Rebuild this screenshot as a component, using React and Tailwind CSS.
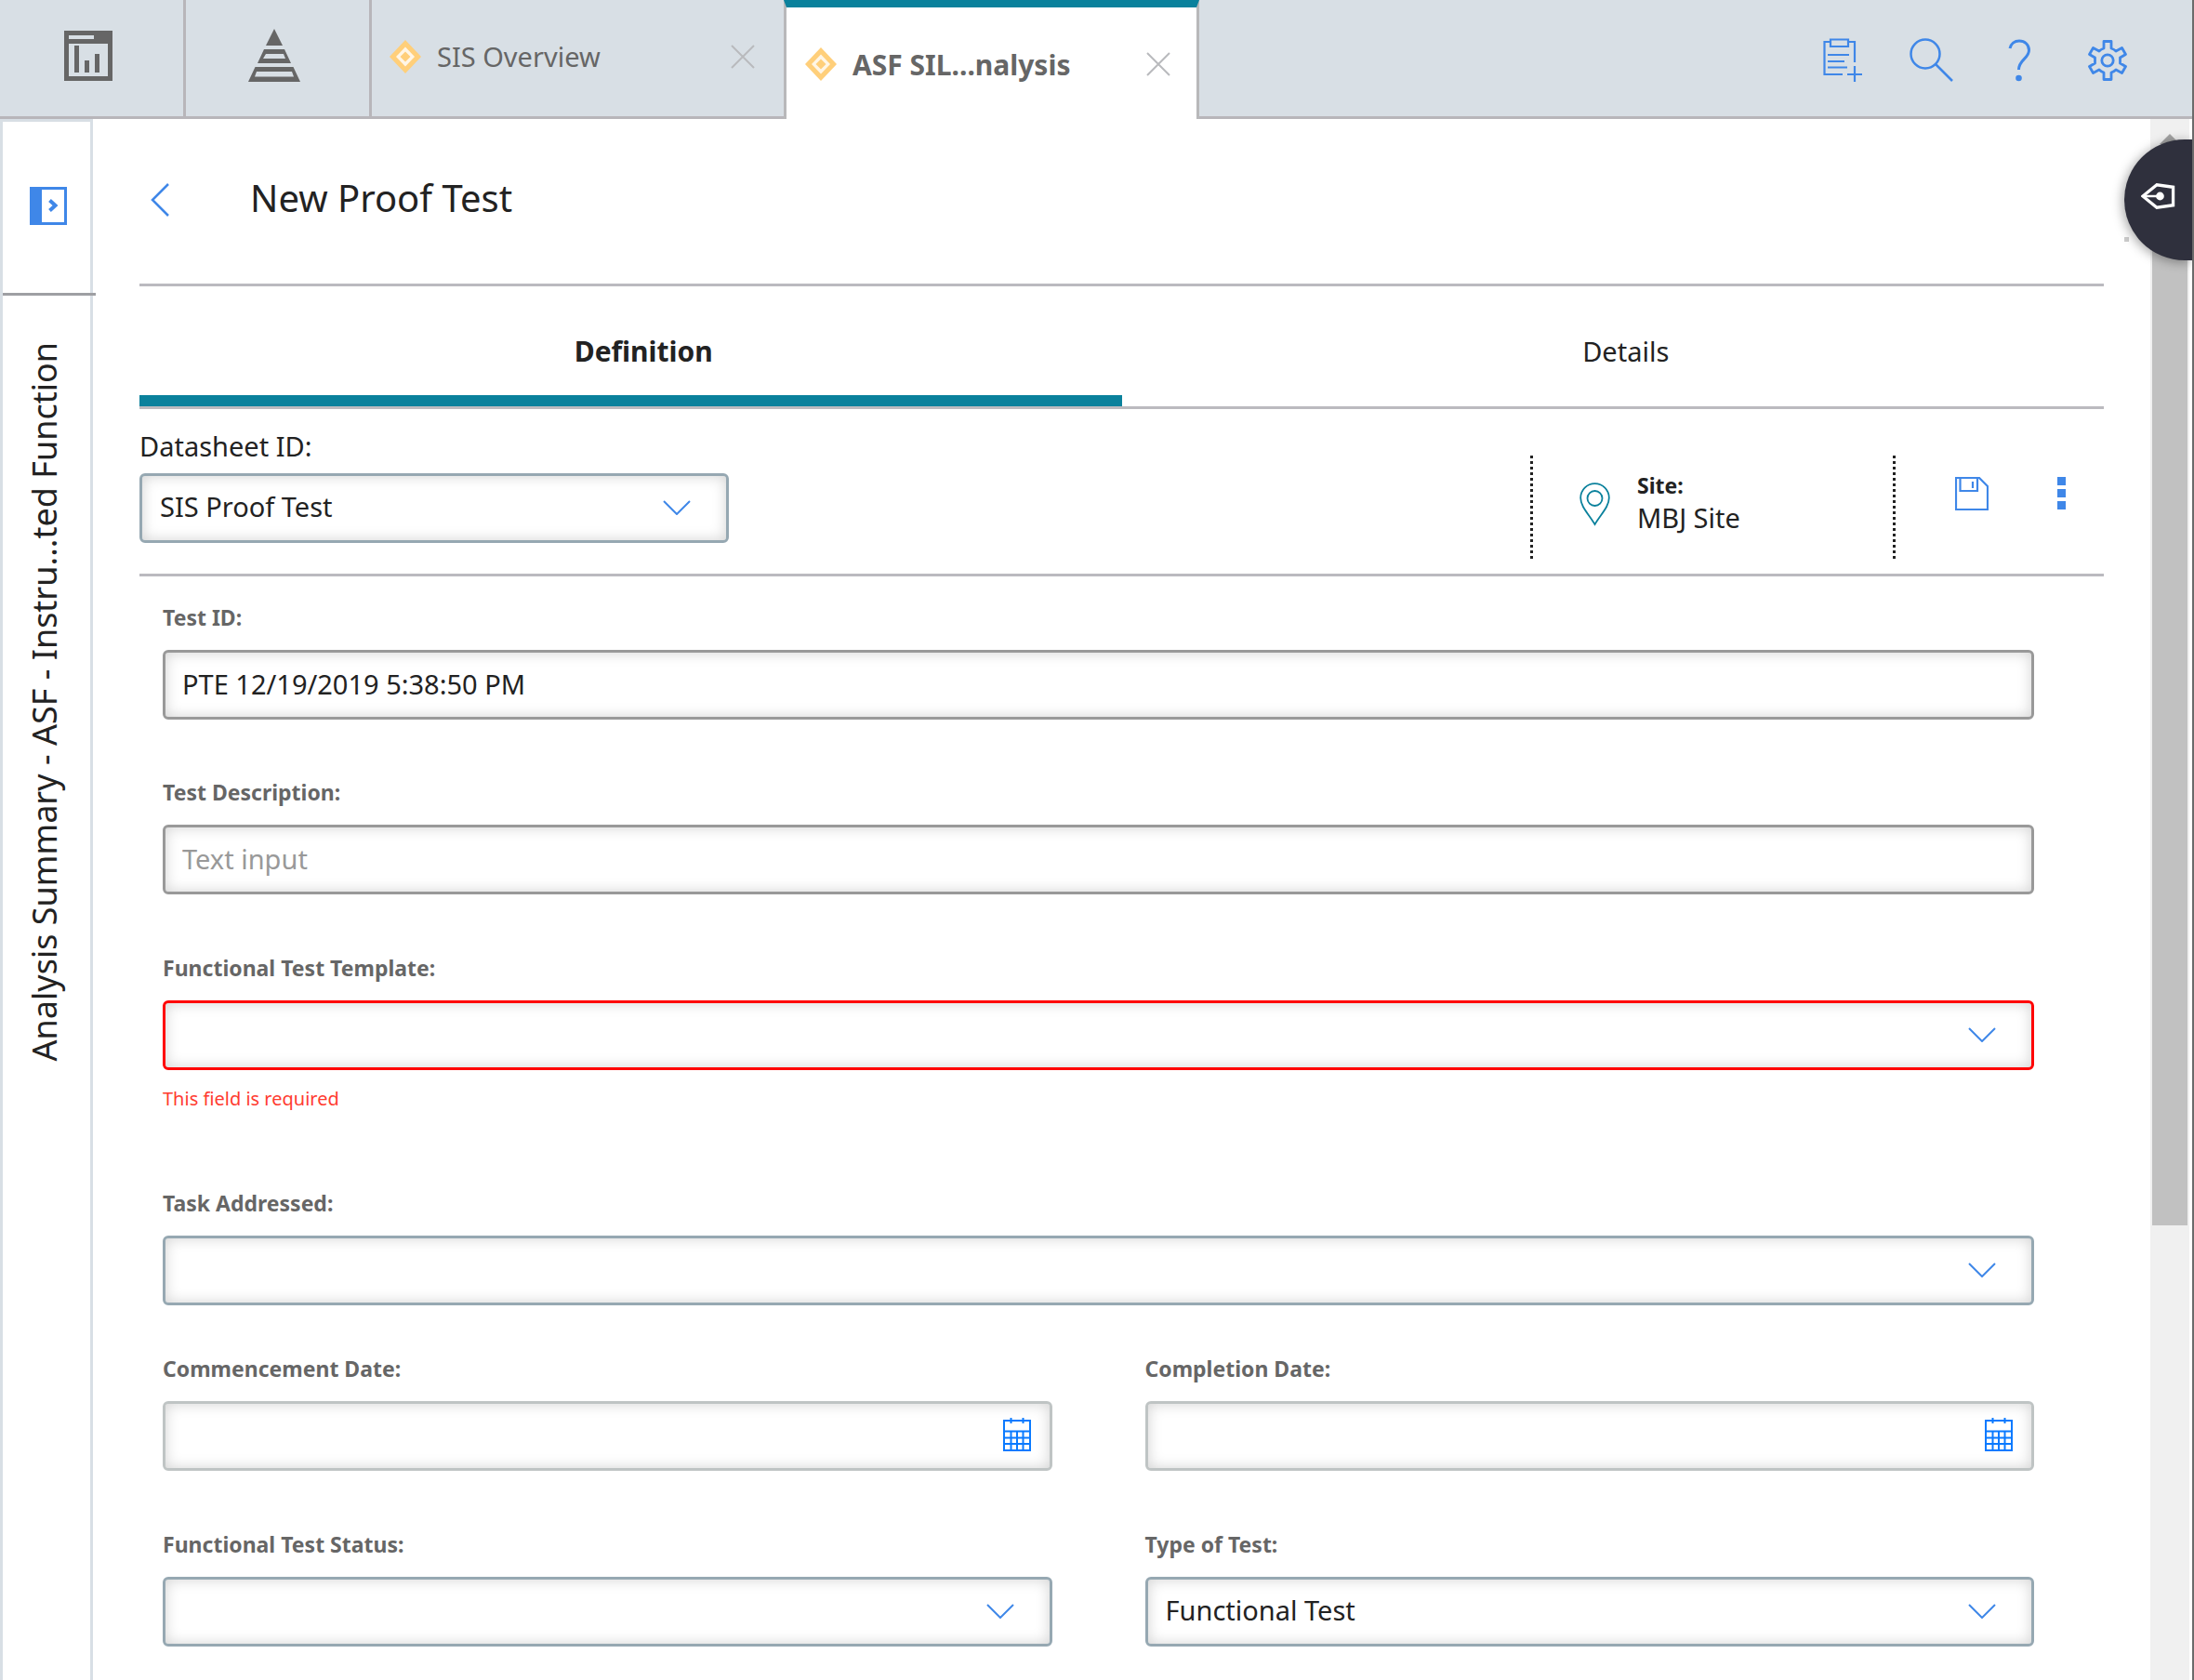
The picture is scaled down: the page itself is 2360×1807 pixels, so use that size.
const fieldBase =
  "h-[75px] w-full rounded-md border-[3px] bg-white pr-5 pb-[3px] text-[29px] leading-10 text-[#222222] shadow-[inset_0_0_15px_rgba(0,0,0,0.18)] outline-none placeholder:text-[#999999]";

function CloseIcon() {
  return (
    <svg className="h-[26px] w-[26px]" viewBox="0 0 26 26" fill="none" stroke="#b9babd" strokeWidth="2">
      <path d="M1 1 25 25M25 1 1 25" />
    </svg>
  );
}

function DiamondIcon() {
  return (
    <svg className="h-9 w-[34px] shrink-0" viewBox="0 0 34 36">
      <path d="M17 0 34 18 17 36 0 18Z" fill="#ffcf7a" />
      <path d="M17 7.5 27 18 17 28.500 7 18Z" fill="#fff6e6" />
      <path d="M17 12.500 22.500 18 17 23.500 11.500 18Z" fill="#ffcf7a" />
    </svg>
  );
}

function Tab({ label, active }) {
  return (
    <div
      className={
        active
          ? "flex w-[447px] items-center border-x-[3px] border-t-8 border-x-[#b8b8ba] border-t-[#0a819c] bg-white pt-[2px] pr-[28px] pl-5"
          : "flex w-[443px] items-center border-b-[3px] border-[#b8b6ba] pr-[31px] pb-1 pl-[19px]"
      }
    >
      <DiamondIcon />
      <button
        className={
          active
            ? "ml-[17px] flex-1 text-left text-[30px] font-bold text-[#666666]"
            : "ml-[17px] flex-1 text-left text-[29px] text-[#666666]"
        }
      >
        {label}
      </button>
      <button aria-label={"Close " + label}>
        <CloseIcon />
      </button>
    </div>
  );
}

function Header() {
  return (
    <header className="flex h-32 bg-[#d8dfe5]">
      <button
        aria-label="Dashboard"
        className="flex w-[200px] items-center justify-center border-r-[3px] border-b-[3px] border-[#b8b6ba] pr-2 pb-[6px]"
      >
        <svg className="h-[54px] w-[52px]" viewBox="0 0 52 54" fill="#666666">
          <path
            fillRule="evenodd"
            d="M0 0H52V54H0ZM5 5V9H32V5ZM5 14V49H47V14Z"
          />
          <path d="M11 16h5v29h-5zM22 32h5v13h-5zM33 25h5v20h-5z" />
        </svg>
      </button>
      <button
        aria-label="Hierarchy"
        className="flex w-[200px] items-center justify-center border-r-[3px] border-b-[3px] border-[#b8b6ba] pr-2 pb-[6px]"
      >
        <svg className="h-[57px] w-14" viewBox="0 0 56 57" fill="#666666">
          <path d="M28 0 37 18H19Z" />
          <path fillRule="evenodd" d="M17 22H39L46 37H10ZM19 27 16 32H40L38 27Z" />
          <path fillRule="evenodd" d="M7.500 41H48.500L56 57H0ZM9 46 7 51.500H49L47 46Z" />
        </svg>
      </button>
      <Tab label="SIS Overview" />
      <Tab label="ASF SIL...nalysis" active />
      <div className="flex flex-1 items-center justify-end border-b-[3px] border-[#b8b6ba] pt-1 pr-[70px] text-[#3f87e8]">
        <button aria-label="Add to clipboard" className="mr-[51px]">
          <svg className="h-[47px] w-[42px]" viewBox="0 0 42 47" fill="none" stroke="currentColor" strokeWidth="2.200">
            <path d="M8 4H1.500V39H21M27 4H34V26M8 1.500H27V9H8ZM5 18H28M5 25H23M5 31.500H26M34 30V47M26 39H42" />
          </svg>
        </button>
        <button aria-label="Search" className="mr-[59px]">
          <svg className="h-[47px] w-[47px]" viewBox="0 0 47 47" fill="none" stroke="currentColor" strokeWidth="2.500">
            <circle cx="17" cy="17" r="15.500" />
            <path d="M28 28 46 46" />
          </svg>
        </button>
        <button aria-label="Help" className="mr-[62px]">
          <svg className="h-[46px] w-6" viewBox="0 0 24 46" fill="none" stroke="currentColor" strokeWidth="3">
            <path d="M2 10C3 5 7 2 12 2C18 2 22.500 6 22.500 12C22.500 21 11.500 22 11.500 33" />
            <circle cx="11.500" cy="42" r="3.300" fill="currentColor" stroke="none" />
          </svg>
        </button>
        <button aria-label="Settings">
          <svg className="h-11 w-[42px]" viewBox="0 0 42 44" fill="none" stroke="currentColor" strokeWidth="2.800" strokeLinejoin="round">
            <path d="M17 1.500H25V9Q28 10 30 12L36.500 8.500L40.500 15.500L34.500 19V25L40.500 28.500L36.500 35.500L30 32Q28 34 25 35V42.500H17V35Q14 34 12 32L5.500 35.500L1.500 28.500L7.500 25V19L1.500 15.500L5.500 8.500L12 12Q14 10 17 9Z" />
            <circle cx="21" cy="22" r="6.200" />
          </svg>
        </button>
      </div>
    </header>
  );
}

function Sidebar() {
  return (
    <aside className="flex w-[100px] shrink-0 flex-col border-x-[3px] border-t-[3px] border-[#d8dfe5]">
      <div className="-mr-[6px] flex h-[187px] items-center border-b-[3px] border-[#9e9fa3] pb-1 pl-[29px]">
        <button aria-label="Expand panel" className="text-[#3f87e8]">
          <svg className="h-[41px] w-10" viewBox="0 0 40 41" fill="none">
            <path fillRule="evenodd" d="M0 0H40V41H0ZM13 3V38H37V3Z" fill="currentColor" />
            <path d="M21.500 14.500 27.500 20 21.500 25.500" stroke="currentColor" strokeWidth="4" />
          </svg>
        </button>
      </div>
      <div className="flex justify-center pt-[50px] pr-1">
        <span className="rotate-180 text-[36px] leading-[50px] whitespace-nowrap text-[#222222] [writing-mode:vertical-rl]">
          Analysis Summary - ASF - Instru...ted Function
        </span>
      </div>
    </aside>
  );
}

function Label({ htmlFor, children }) {
  return (
    <label htmlFor={htmlFor} className="mb-[19px] h-8 text-[23px] leading-8 font-bold text-[#666666]">
      {children}
    </label>
  );
}

function Chevron() {
  return (
    <svg
      className="pointer-events-none absolute top-[29px] right-[41px] h-4 w-[30px]"
      viewBox="0 0 30 16"
      fill="none"
      stroke="#3f87e8"
      strokeWidth="2"
    >
      <path d="M1 1 15 15 29 1" />
    </svg>
  );
}

function Select({ id, value, error }) {
  return (
    <div className="relative">
      <select
        id={id}
        defaultValue={value}
        aria-invalid={error ? true : undefined}
        className={fieldBase + (error ? " appearance-none border-[#ff0000] pl-[19px]" : " appearance-none border-[#96a8b2] pl-[19px]")}
      >
        <option>{value}</option>
      </select>
      <Chevron />
    </div>
  );
}

function SelectField({ id, label, value = "", error }) {
  return (
    <div className="flex flex-1 flex-col">
      <Label htmlFor={id}>{label}</Label>
      <Select id={id} value={value} error={error} />
      {error && <p className="mt-[15px] h-8 text-[20px] leading-8 text-[#ff3b30]">{error}</p>}
    </div>
  );
}

function TextField({ id, label, value, placeholder }) {
  return (
    <div className="flex flex-1 flex-col">
      <Label htmlFor={id}>{label}</Label>
      <input
        id={id}
        type="text"
        defaultValue={value}
        placeholder={placeholder}
        className={fieldBase + " border-[#999999] pl-[18px]"}
      />
    </div>
  );
}

function DateField({ id, label }) {
  return (
    <div className="flex flex-1 flex-col">
      <Label htmlFor={id}>{label}</Label>
      <div className="relative">
        <input id={id} type="text" className={fieldBase + " border-[#bfc4c4] pl-[18px]"} />
        <button type="button" aria-label={"Pick " + label} className="absolute top-[18px] right-[23px]">
          <svg className="h-9 w-[30px]" viewBox="0 0 30 36" fill="none" stroke="#0a7aff" strokeWidth="2">
            <path d="M1 3H29V35H1ZM1 14.500H29M1 21.500H29M1 28H29M8.500 0V6M21.500 0V6M8.500 14.500V35M15 14.500V35M21.500 14.500V35" />
          </svg>
        </button>
      </div>
    </div>
  );
}

function DottedRule() {
  return (
    <div className="h-[111px] w-[3px] bg-[repeating-linear-gradient(to_bottom,#222222_0_3px,transparent_3px_6px)]" />
  );
}

function Toolbar() {
  return (
    <div className="flex h-[180px] border-b-[3px] border-[#bbbabf]">
      <div className="flex w-[634px] flex-col pt-5">
        <label htmlFor="datasheet" className="mb-[9px] h-10 text-[29px] leading-10 text-[#222222]">
          Datasheet ID:
        </label>
        <Select id="datasheet" value="SIS Proof Test" />
      </div>
      <div className="ml-auto flex pt-[50px]">
        <DottedRule />
        <svg className="mt-[29px] ml-[50px] h-[47px] w-[33px]" viewBox="0 0 33 47" fill="none" stroke="#0a819c" strokeWidth="1.800">
          <path d="M16.500 45C10 34 1.200 26 1.200 16.500A15.300 15.300 0 0 1 31.800 16.500C31.800 26 23 34 16.500 45Z" />
          <circle cx="16.500" cy="17" r="8" />
        </svg>
        <div className="ml-[29px] w-[275px] pt-[15px] text-[#222222]">
          <div className="h-[34px] text-[23px] leading-[34px] font-bold">Site:</div>
          <div className="h-9 text-[29px] leading-9">MBJ Site</div>
        </div>
        <DottedRule />
        <button aria-label="Save" className="mt-[23px] ml-16 h-9 text-[#3f87e8]">
          <svg className="h-9 w-9" viewBox="0 0 36 36" fill="none" stroke="currentColor" strokeWidth="2.200">
            <path d="M1 1H26L35 10V35H1Z" />
            <path d="M5.500 1V15H24V1M19 5V12" />
          </svg>
        </button>
        <button aria-label="More actions" className="mt-[23px] mr-[41px] ml-[74px] flex h-9 flex-col gap-1">
          <span className="size-[9px] bg-[#3f87e8]" />
          <span className="size-[9px] bg-[#3f87e8]" />
          <span className="size-[9px] bg-[#3f87e8]" />
        </button>
      </div>
    </div>
  );
}

function Scrollbar() {
  return (
    <div className="relative w-[45px] shrink-0">
      <div className="flex h-full w-[42px] flex-col items-center bg-[#f0f0f0]">
        <svg className="mt-4 h-[11px] w-[22px]" viewBox="0 0 22 11" fill="#a3a3a3">
          <path d="M11 0 22 11H0Z" />
        </svg>
        <div className="mt-4 h-[1147px] w-[38px] bg-[#c1c1c1]" />
      </div>
      <div className="absolute top-[127px] -left-7 size-[5px] bg-[#cccccc]" />
      <button
        aria-label="Open guide"
        className="absolute top-[22px] right-0 flex h-[130px] w-[73px] items-center rounded-l-full bg-[#2f303d] pr-[18px] pb-2 pl-[18px] shadow-[-2px_2px_12px_rgba(0,0,0,0.35)]"
      >
        <svg className="h-[30px] w-[38px]" viewBox="0 0 38 30" fill="none" stroke="#ffffff">
          <path d="M2 15 17.500 2.500 35.500 5V25L17.500 27.500Z" strokeWidth="3.400" />
          <path d="M3 15H20" strokeWidth="2.500" />
          <circle cx="21" cy="15" r="4.500" fill="#ffffff" stroke="none" />
        </svg>
      </button>
    </div>
  );
}

export default function App() {
  return (
    <div className='flex h-screen flex-col overflow-hidden border-r-2 border-[#6b6b6b] bg-white font-["Noto_Sans","Open_Sans",sans-serif]'>
      <Header />
      <div className="flex min-h-0 flex-1">
        <Sidebar />
        <main className="flex-1 pr-[50px] pl-[50px]">
          <div className="flex h-[180px] items-center border-b-[3px] border-[#bbbabf] pb-1 pl-3">
            <button aria-label="Back">
              <svg className="h-9 w-5" viewBox="0 0 20 36" fill="none" stroke="#3f87e8" strokeWidth="2.500">
                <path d="M19 1 2 18 19 35" />
              </svg>
            </button>
            <h1 className="ml-[87px] pb-[3px] text-[40px] leading-[50px] text-[#222222]">New Proof Test</h1>
          </div>
          <nav className="flex h-[132px] border-b-[3px] border-[#bbbabf] text-[#222222]">
            <button className="flex-1 border-b-[12px] border-[#0a819c] pt-[22px] pl-7 text-[30px] font-bold">Definition</button>
            <button className="flex-1 border-b-[12px] border-transparent pt-[22px] pl-7 text-[29px]">Details</button>
          </nav>
          <Toolbar />
          <form className="flex flex-col pt-7 pr-[75px] pl-[25px]">
            <TextField id="test-id" label="Test ID:" value="PTE 12/19/2019 5:38:50 PM" />
            <div className="mt-[62px] flex">
              <TextField id="description" label="Test Description:" placeholder="Text input" />
            </div>
            <div className="mt-[63px] flex">
              <SelectField id="template" label="Functional Test Template:" error="This field is required" />
            </div>
            <div className="mt-20 flex">
              <SelectField id="task" label="Task Addressed:" />
            </div>
            <div className="mt-[52px] flex gap-[100px]">
              <DateField id="commencement" label="Commencement Date:" />
              <DateField id="completion" label="Completion Date:" />
            </div>
            <div className="mt-[63px] flex gap-[100px]">
              <SelectField id="status" label="Functional Test Status:" />
              <SelectField id="type" label="Type of Test:" value="Functional Test" />
            </div>
          </form>
        </main>
        <Scrollbar />
      </div>
    </div>
  );
}
